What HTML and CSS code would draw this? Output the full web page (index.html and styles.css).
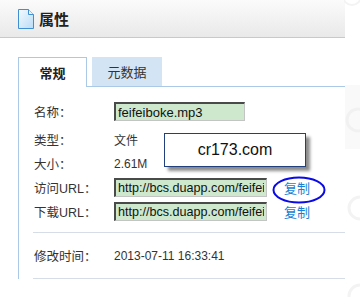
FILE: index.html
```html
<!DOCTYPE html>
<html lang="zh-CN">
<head>
  <meta charset="UTF-8" />
  <title>属性</title>
  <meta name="viewport" content="width=device-width, initial-scale=1.0" />
  <link rel="stylesheet" href="styles.css">
</head>
<body>
  <div class="page">
    <div class="header">
      <svg class="doc-icon" width="16" height="20" viewBox="0 0 16 20">
        <defs>
          <linearGradient id="docFill" x1="0" y1="0" x2="1" y2="1">
            <stop offset="0" stop-color="#f4faff"/>
            <stop offset="1" stop-color="#b9dcf5"/>
          </linearGradient>
        </defs>
        <path d="M0.5 0.5 H10.5 L15.5 5.5 V19.5 H0.5 Z" fill="url(#docFill)" stroke="#3f8fd2"/>
        <path d="M10.5 0.5 V5.5 H15.5" fill="#e6f3fc" stroke="#3f8fd2"/>
      </svg>
      <span class="title">属性</span>
    </div>

    <div class="content">
      <div class="tabs">
        <div class="tab active">常规</div>
        <div class="tab">元数据</div>
      </div>

      <div class="panel">
        <div class="row r1">
          <span class="label">名称：</span>
          <input class="field short" type="text" value="feifeiboke.mp3" />
        </div>
        <div class="row r2">
          <span class="label">类型：</span>
          <span class="value">文件</span>
        </div>
        <div class="row r3">
          <span class="label">大小：</span>
          <span class="value">2.61M</span>
        </div>
        <div class="row r4">
          <span class="label">访问URL：</span>
          <input class="field url" type="text" value="http://bcs.duapp.com/feifeiboke/feifeiboke.mp3" />
          <a class="copy" href="#">复制</a>
        </div>
        <div class="row r5">
          <span class="label">下载URL：</span>
          <input class="field url" type="text" value="http://bcs.duapp.com/feifeiboke/feifeiboke.mp3" />
          <a class="copy" href="#">复制</a>
        </div>
        <div class="sep"></div>
        <div class="row time">
          <span class="label">修改时间：</span>
          <span class="value">2013-07-11 16:33:41</span>
        </div>
        <div class="sep"></div>
      </div>
    </div>

    <div class="stamp">cr173.com</div>
    <svg class="circle-mark" width="54" height="28" viewBox="0 0 54 28">
      <ellipse cx="27" cy="14" rx="25.5" ry="12.5" fill="none" stroke="#0a0ae6" stroke-width="2"/>
    </svg>

    <!-- faint background watermark at the right edge -->
    <svg class="watermark" width="16" height="297" viewBox="0 0 16 297">
      <rect x="1" y="85" width="15" height="64" fill="#f9f9f9"/>
      <circle cx="14" cy="120" r="11" fill="none" stroke="#f1f1f1" stroke-width="3"/>
      <circle cx="16" cy="208" r="11" fill="none" stroke="#f3f3f3" stroke-width="3"/>
      <circle cx="16" cy="296" r="11" fill="none" stroke="#f3f3f3" stroke-width="3"/>
      <circle cx="8" cy="-4" r="9" fill="none" stroke="#f3f3f3" stroke-width="2"/>
    </svg>
  </div>
</body>
</html>
```

FILE: styles.css
```css
body {
  margin: 0;
  background: #ffffff;
  font-family: "Liberation Sans", "Noto Sans CJK SC", sans-serif;
  color: #333;
}
.page {
  position: relative;
  width: 360px;
  height: 297px;
  overflow: hidden;
}
.header {
  width: 345px;
  height: 38px;
  border-bottom: 1px solid #c9c9c9;
  background: linear-gradient(#fbfbfb, #e9e9e9);
  display: flex;
  align-items: center;
  padding-left: 18px;
  box-sizing: border-box;
}
.doc-icon {
  display: block;
  margin-right: 5px;
}
.title {
  font-size: 15px;
  font-weight: bold;
  color: #222;
}
.content {
  padding-left: 18px;
  margin-top: 19px;
  width: 345px;
  box-sizing: border-box;
}
.tabs {
  display: flex;
  gap: 5px;
  height: 29px;
  border-bottom: 1px solid #a9c9e6;
}
.tab {
  width: 70px;
  height: 29px;
  background: #d3e4f5;
  font-size: 13px;
  color: #333;
  display: flex;
  align-items: center;
  justify-content: center;
}
.tab.active {
  width: 69px;
  height: 30px;
  box-sizing: border-box;
  background: #fff;
  border: 1px solid #a9c9e6;
  border-bottom: none;
  font-weight: bold;
  color: #222;
}
.panel {
  border-left: 1px solid #a9c9e6;
  padding-top: 10px;
  padding-left: 15px;
  height: 182px;
}
.row {
  display: flex;
  align-items: center;
  font-size: 12px;
}
.r1 { height: 29px; }
.r2 { height: 26px; }
.r3 { height: 23px; }
.r4 { height: 24px; }
.r5 { height: 25px; }
.time { height: 45px; }
.label {
  width: 80px;
  flex: none;
  font-family: "Liberation Sans", "Noto Sans CJK JP", sans-serif;
  font-size: 12.5px;
}
.field {
  width: 153px;
  height: 19px;
  box-sizing: border-box;
  margin: 0;
  padding: 0 2px;
  font-family: "Liberation Sans", sans-serif;
  font-size: 13px;
  color: #111;
  background: #cde8cd;
  border-style: solid;
  border-width: 2px 1px 1px 2px;
  border-color: #4a4a4a #c4c4c4 #c4c4c4 #4a4a4a;
}
.field.short {
  width: 131px;
}
.field.url {
  font-size: 12.6px;
}
.copy {
  margin-left: 17px;
  font-size: 13px;
  color: #1a7fd4;
  text-decoration: none;
}
.sep {
  height: 1px;
  background: #d6dde6;
  margin-left: -1px;
}
.r5 + .sep {
  margin-top: 8px;
}
.stamp {
  position: absolute;
  left: 164px;
  top: 133px;
  width: 142px;
  height: 34px;
  box-sizing: border-box;
  border: 1px solid #23407e;
  background: #fff;
  box-shadow: 4px 4px 3px rgba(0, 0, 0, 0.45);
  font-size: 16px;
  color: #111;
  display: flex;
  align-items: center;
  justify-content: center;
}
.circle-mark {
  position: absolute;
  left: 272px;
  top: 176px;
}
.watermark {
  position: absolute;
  right: 0;
  top: 0;
}
```
